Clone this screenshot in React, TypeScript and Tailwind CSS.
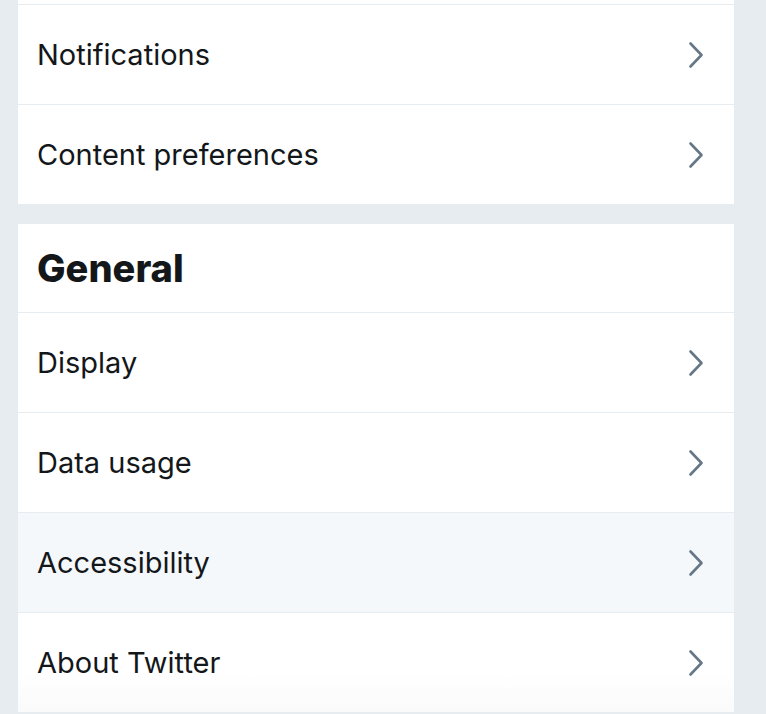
import { ChevronRight } from "lucide-react";

type Row = { label: string; active?: boolean };

const accountRows: Row[] = [{ label: "Notifications" }, { label: "Content preferences" }];

const generalRows: Row[] = [
  { label: "Display" },
  { label: "Data usage" },
  { label: "Accessibility", active: true },
  { label: "About Twitter" },
];

function Chevron() {
  return (
    <svg width="16" height="28" viewBox="0 0 16 28" fill="none" aria-hidden>
      <path
        d="M2.5 2.5 L13.5 14 L2.5 25.5"
        stroke="#657786"
        strokeWidth="2.6"
        strokeLinecap="round"
        strokeLinejoin="round"
      />
    </svg>
  );
}

function SettingsRow({ label, active, last }: Row & { last?: boolean }) {
  return (
    <div
      className={`flex h-[100px] items-center justify-between border-t border-[#e6ecf0] pl-[19px] pr-[30px] ${
        active ? "bg-[#f5f8fa]" : last ? "bg-gradient-to-b from-white from-60% to-[#fafafa]" : "bg-white"
      }`}
    >
      <span className="text-[29px] leading-none text-[#14171a]">{label}</span>
      <Chevron />
    </div>
  );
}

export default function App() {
  return (
    <div
      className="h-[714px] overflow-hidden bg-[#e6ecf0] pl-[18px] pr-[32px]"
      style={{ fontFamily: "Inter, 'Noto Sans', sans-serif" }}
    >
      {/* Account section (scrolled) */}
      <div className="bg-white">
        <div className="h-[4px]" />
        {accountRows.map((r) => (
          <SettingsRow key={r.label} {...r} />
        ))}
      </div>

      {/* General */}
      <div className="mt-[20px] border-b border-[#e6ecf0] bg-white">
        <div className="flex h-[88px] items-center pl-[19px]">
          <h2 className="text-[38px] font-extrabold leading-none text-[#14171a]">General</h2>
        </div>
        {generalRows.map((r, i) => (
          <SettingsRow key={r.label} {...r} last={i === generalRows.length - 1} />
        ))}
      </div>
    </div>
  );
}
